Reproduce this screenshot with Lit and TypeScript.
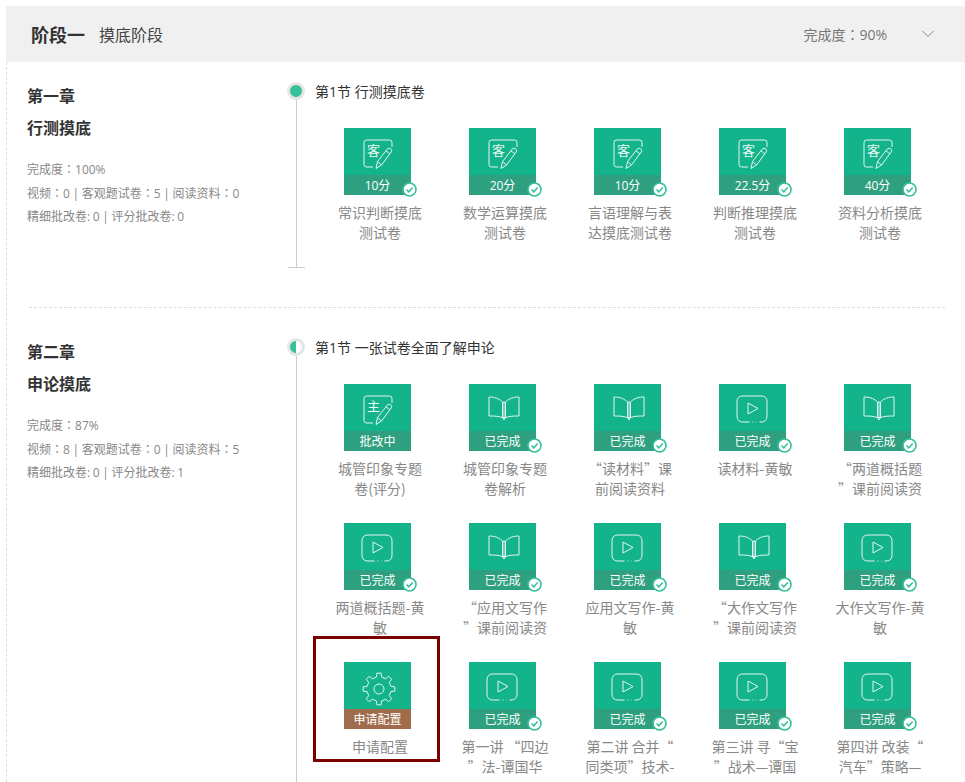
import { LitElement, html, css, svg } from "lit";
import { customElement } from "lit/decorators.js";

type Kind = "ke" | "zhu" | "book" | "play" | "gear";
interface Item { kind: Kind; band: string; lines: string[]; done?: boolean; apply?: boolean; }

const paper = (ch: string) => svg`
  <path d="M29 39H22.5Q20 39 20 36.500V14.500Q20 12 22.500 12H45.500Q48 12 48 14.500V19"/>
  <path d="M32 40.500L33.500 33.500L43.500 20.800Q45 19.500 46.800 20.800Q48.300 22.300 47.200 24L37.500 37Z"/>
  <path d="M33.500 33.500L37.500 37M42 22.800L45.800 25.800"/>
  <text x="23" y="26.500" class="glyph">${ch}</text>`;

const book = svg`
  <path d="M33 17.500C29 14 25 13 20 13V32C25 32 29.500 32 33 33.500H37C40.500 32 45 32 50 32V13C45 13 41 14 37 17.500"/>
  <path class="spine" d="M33.500 18H36.500V33.500L35 36L33.500 33.500Z"/>`;

const play = svg`
  <path d="M30.500 38H24Q18 38 18 32V18Q18 12 24 12H42Q48 12 48 18V32Q48 38 42 38H40.500"/>
  <path d="M33.500 38H34.500M37.500 38H38"/>
  <path d="M29 19L39 24.500L29 30Z"/>`;

function gearPath(): string {
  const cx = 35, cy = 27, outer = 16, inner = 12.2, teeth = 8;
  const step = (Math.PI * 2) / teeth;
  let d = "";
  for (let i = 0; i < teeth; i++) {
    const a = i * step - Math.PI / 2;
    const pts: [number, number][] = [
      [inner, a - step * 0.27],
      [outer, a - step * 0.17],
      [outer, a + step * 0.17],
      [inner, a + step * 0.27],
    ];
    for (const [r, t] of pts) {
      const x = (cx + r * Math.cos(t)).toFixed(2);
      const y = (cy + r * Math.sin(t)).toFixed(2);
      d += `${d ? "L" : "M"}${x} ${y}`;
    }
  }
  return d + "Z";
}

const gear = svg`<path d=${gearPath()}/><circle cx="35" cy="27" r="5"/>`;

const icons: Record<Kind, unknown> = {
  ke: paper("客"),
  zhu: paper("主"),
  book,
  play,
  gear,
};

const chapters = [
  {
    name: "第一章",
    title: "行测摸底",
    stats: ["完成度：100%", "视频：0 | 客观题试卷：5 | 阅读资料：0", "精细批改卷: 0 | 评分批改卷: 0"],
    half: false,
    open: false,
    section: "第1节 行测摸底卷",
    items: [
      { kind: "ke", band: "10分", done: true, lines: ["常识判断摸底", "测试卷"] },
      { kind: "ke", band: "20分", done: true, lines: ["数学运算摸底", "测试卷"] },
      { kind: "ke", band: "10分", done: true, lines: ["言语理解与表", "达摸底测试卷"] },
      { kind: "ke", band: "22.5分", done: true, lines: ["判断推理摸底", "测试卷"] },
      { kind: "ke", band: "40分", done: true, lines: ["资料分析摸底", "测试卷"] },
    ] as Item[],
  },
  {
    name: "第二章",
    title: "申论摸底",
    stats: ["完成度：87%", "视频：8 | 客观题试卷：0 | 阅读资料：5", "精细批改卷: 0 | 评分批改卷: 1"],
    half: true,
    open: true,
    section: "第1节 一张试卷全面了解申论",
    items: [
      { kind: "zhu", band: "批改中", lines: ["城管印象专题", "卷(评分)"] },
      { kind: "book", band: "已完成", done: true, lines: ["城管印象专题", "卷解析"] },
      { kind: "book", band: "已完成", done: true, lines: ["“读材料”课", "前阅读资料"] },
      { kind: "play", band: "已完成", done: true, lines: ["读材料-黄敏"] },
      { kind: "book", band: "已完成", done: true, lines: ["“两道概括题", "”课前阅读资"] },
      { kind: "play", band: "已完成", done: true, lines: ["两道概括题-黄", "敏"] },
      { kind: "book", band: "已完成", done: true, lines: ["“应用文写作", "”课前阅读资"] },
      { kind: "play", band: "已完成", done: true, lines: ["应用文写作-黄", "敏"] },
      { kind: "book", band: "已完成", done: true, lines: ["“大作文写作", "”课前阅读资"] },
      { kind: "play", band: "已完成", done: true, lines: ["大作文写作-黄", "敏"] },
      { kind: "gear", band: "申请配置", apply: true, lines: ["申请配置"] },
      { kind: "play", band: "已完成", done: true, lines: ["第一讲 “四边", "”法-谭国华"] },
      { kind: "play", band: "已完成", done: true, lines: ["第二讲 合并“", "同类项”技术-"] },
      { kind: "play", band: "已完成", done: true, lines: ["第三讲 寻“宝", "”战术—谭国"] },
      { kind: "play", band: "已完成", done: true, lines: ["第四讲 改装“", "汽车”策略—"] },
    ] as Item[],
  },
];

const colon = (s: string) =>
  s.split("：").map((part, i) => (i ? html`<span class="colon">：</span>${part}` : part));

@customElement("app-root")
export class AppRoot extends LitElement {
  static styles = css`
    :host {
      display: block;
      height: 782px;
      overflow: hidden;
      background: #fff;
      font-family: "Open Sans", "Noto Sans CJK SC", sans-serif;
      color: #333;
    }
    .colon { font-family: "Noto Sans CJK TC", sans-serif; }
    .stage { padding: 6px 0 0 6px; }
    .head {
      height: 56px;
      background: #f0f0f0;
      display: flex;
      align-items: center;
      padding: 0 31px 0 25px;
      gap: 14px;
    }
    .head b { font-size: 18px; font-weight: 700; color: #333; }
    .head .name { font-size: 16px; color: #444; }
    .head .pct { margin-left: auto; font-size: 14px; color: #777; }
    .chev { margin-left: 21px; width: 12px; height: 8px; display: block; }
    .body { border-left: 1px dashed #ddd; }
    .chapter { display: flex; padding: 20px 0 0 20px; }
    .divider + .chapter { padding-top: 30px; }
    .info { width: 260px; flex: none; }
    .info h3 {
      margin: 0 0 4px;
      font-size: 16px;
      line-height: 28px;
      font-weight: 700;
      color: #333;
    }
    .stats { margin-top: 15px; font-size: 12px; line-height: 23px; color: #888; word-spacing: -0.5px; }
    .rail { width: 18px; flex: none; display: flex; flex-direction: column; align-items: center; }
    .dot {
      width: 18px;
      height: 18px;
      box-sizing: border-box;
      border: 3px solid #e5e5e5;
      border-radius: 50%;
      background: #35c09a;
      flex: none;
    }
    .dot.half { background: linear-gradient(90deg, #35c09a 50%, #fff 50%); }
    .line { flex: 1; width: 1px; background: #ccc; }
    .foot { width: 17px; height: 1px; background: #ccc; flex: none; }
    .main { flex: 1; margin-left: 10px; }
    .sec { font-size: 14px; line-height: 20px; height: 18px; color: #333; }
    .grid {
      display: grid;
      grid-template-columns: repeat(5, 125px);
      margin: 28px 0 0 20px;
      padding-bottom: 1px;
    }
    .item { position: relative; height: 139px; }
    .tile {
      position: relative;
      width: 67px;
      height: 67px;
      margin-left: 9px;
      background: #13b38b;
      display: flex;
      flex-direction: column;
    }
    .tile svg.ic {
      width: 67px;
      height: 47px;
      flex: none;
      fill: none;
      stroke: #e4f6f1;
      stroke-width: 1;
    }
    .glyph {
      font-size: 13px;
      fill: #eafaf5;
      stroke: none;
    }
    .spine { fill: rgba(255, 255, 255, 0.4); }
    .band {
      height: 20px;
      line-height: 22px;
      background: #2ea080;
      color: #fff;
      font-size: 12px;
      text-align: center;
    }
    .band.apply { background: #a06c4b; }
    .check {
      position: absolute;
      right: -6px;
      bottom: -2px;
      width: 15px;
      height: 15px;
    }
    .label {
      width: 90px;
      margin-top: 7px;
      font-family: "Noto Sans CJK SC", sans-serif;
      font-size: 14px;
      line-height: 20px;
      color: #888;
      text-align: center;
      white-space: nowrap;
    }
    .mark {
      position: absolute;
      left: -22px;
      top: -26px;
      width: 127px;
      height: 126px;
      box-sizing: border-box;
      border: 3px solid #7b0000;
      pointer-events: none;
    }
    .divider {
      margin: 39px 20px 0 22px;
      border-top: 1px dashed #ddd;
    }
  `;

  private renderItem(it: Item) {
    return html`<div class="item">
      <div class="tile">
        <svg class="ic" viewBox="0 0 67 47">${icons[it.kind]}</svg>
        <div class="band ${it.apply ? "apply" : ""}">${it.band}</div>
        ${it.done
          ? html`<svg class="check" viewBox="0 0 15 15">
              <circle cx="7.5" cy="7.5" r="6.5" fill="#fff" stroke="#35c09a" stroke-width="1.600" />
              <path d="M4.500 7.500L6.800 9.800L10.700 5.500" fill="none" stroke="#35c09a" stroke-width="1.500" />
            </svg>`
          : ""}
      </div>
      <div class="label">${it.lines.map((l) => html`<div>${l}</div>`)}</div>
      ${it.apply ? html`<div class="mark"></div>` : ""}
    </div>`;
  }

  render() {
    return html`<div class="stage">
      <div class="head">
        <b>阶段一</b>
        <span class="name">摸底阶段</span>
        <span class="pct">${colon("完成度：90%")}</span>
        <svg class="chev" viewBox="0 0 12 8">
          <path d="M0.500 1L6 6.500L11.500 1" fill="none" stroke="#888" stroke-width="1" />
        </svg>
      </div>
      <div class="body">
        ${chapters.map(
          (c, i) => html`
            ${i ? html`<div class="divider"></div>` : ""}
            <section class="chapter">
              <div class="info">
                <h3>${c.name}</h3>
                <h3>${c.title}</h3>
                <div class="stats">${c.stats.map((s) => html`<div>${colon(s)}</div>`)}</div>
              </div>
              <div class="rail">
                <div class="dot ${c.half ? "half" : ""}"></div>
                <div class="line"></div>
                ${c.open ? "" : html`<div class="foot"></div>`}
              </div>
              <div class="main">
                <div class="sec">${c.section}</div>
                <div class="grid">${c.items.map((it) => this.renderItem(it))}</div>
              </div>
            </section>
          `
        )}
      </div>
    </div>`;
  }
}
